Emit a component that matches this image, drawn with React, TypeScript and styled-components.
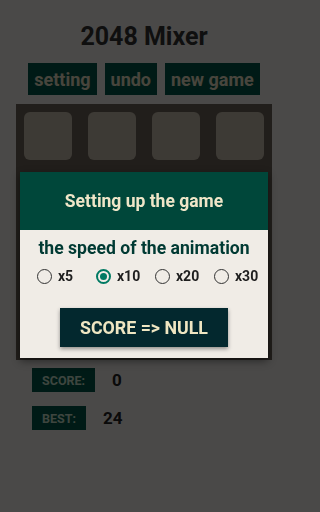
import styled, { createGlobalStyle, css } from "styled-components";

const GlobalStyle = createGlobalStyle`
  html, body {
    margin: 0;
    padding: 0;
    background: #f7f4f0;
    font-family: Roboto, "Liberation Sans", sans-serif;
  }
`;

const Page = styled.div`
  width: 288px;
  height: 512px;
  padding-top: 22px;
  box-sizing: border-box;
`;

const Title = styled.h1`
  margin: 0;
  text-align: center;
  font-size: 25px;
  line-height: 30px;
  font-weight: 700;
  color: #333;
`;

const Toolbar = styled.div`
  margin-top: 11px;
  display: flex;
  justify-content: center;
  gap: 8px;
`;

const ToolButton = styled.div`
  height: 32px;
  padding: 0 6px;
  display: flex;
  align-items: center;
  background: #00584a;
  color: #f0e8cc;
  font-size: 18px;
  font-weight: 700;
`;

const Board = styled.div`
  position: relative;
  width: 256px;
  height: 256px;
  margin: 9px auto 0;
  padding: 8px;
  box-sizing: border-box;
  background: #71645a;
  display: grid;
  grid-template-columns: repeat(4, 48px);
  grid-auto-rows: 48px;
  gap: 16px;
`;

const Tile = styled.div`
  background: #cbc1b1;
  border-radius: 6px;
`;

const Shade = styled.div`
  position: fixed;
  inset: 0;
  background: rgba(0, 0, 0, 0.7);
  z-index: 1;
`;

const Modal = styled.div`
  position: absolute;
  left: 4px;
  right: 4px;
  top: 68px;
  height: 186px;
  z-index: 2;
  display: flex;
  flex-direction: column;
  background: #f0ece6;
  box-shadow: 0 3px 8px rgba(0, 0, 0, 0.45);
`;

const ModalHeader = styled.div`
  height: 58px;
  flex: none;
  display: flex;
  align-items: center;
  justify-content: center;
  background: #00473a;
  color: #efe6c8;
  font-size: 17.5px;
  font-weight: 700;
`;

const ModalBody = styled.div`
  padding-top: 7px;
  display: flex;
  flex-direction: column;
`;

const Subtitle = styled.div`
  text-align: center;
  font-size: 17.6px;
  line-height: 22px;
  font-weight: 700;
  color: #003a33;
`;

const Speeds = styled.div`
  margin-top: 7px;
  padding-left: 17px;
  display: grid;
  grid-template-columns: repeat(4, 59px);
  height: 20px;
`;

const Speed = styled.label`
  display: flex;
  align-items: center;
  gap: 6px;
  font-size: 14px;
  font-weight: 700;
  color: #1e1e1e;
`;

const Radio = styled.span<{ checked?: boolean }>`
  width: 15px;
  height: 15px;
  box-sizing: border-box;
  border-radius: 50%;
  border: 1.5px solid #333;
  display: flex;
  align-items: center;
  justify-content: center;

  ${({ checked }) =>
    checked &&
    css`
      border: 2px solid #007a63;
      &::after {
        content: "";
        width: 7px;
        height: 7px;
        border-radius: 50%;
        background: #007a63;
      }
    `}
`;

const ResetButton = styled.div`
  margin: 22px auto 0;
  width: 168px;
  height: 39px;
  display: flex;
  align-items: center;
  justify-content: center;
  background: #03282e;
  color: #efe6c2;
  font-size: 17.8px;
  font-weight: 700;
  box-shadow: 0 2px 4px rgba(0, 0, 0, 0.4);
`;

const Stats = styled.div`
  margin-top: 8px;
  padding-left: 32px;
  display: flex;
  flex-direction: column;
  gap: 14px;
`;

const StatRow = styled.div`
  display: flex;
  align-items: center;
  gap: 17px;
`;

const StatLabel = styled.div`
  height: 24px;
  padding: 0 10px;
  display: flex;
  align-items: center;
  background: #00584a;
  color: #d0e8d4;
  font-size: 12.5px;
  font-weight: 700;
`;

const StatValue = styled.div`
  font-size: 17px;
  font-weight: 700;
  color: #222;
`;

const speeds = ["x5", "x10", "x20", "x30"];

export default function App() {
  return (
    <Page>
      <GlobalStyle />
      <Title>2048 Mixer</Title>
      <Toolbar>
        <ToolButton>setting</ToolButton>
        <ToolButton>undo</ToolButton>
        <ToolButton>new game</ToolButton>
      </Toolbar>
      <Board>
        {Array.from({ length: 16 }, (_, i) => (
          <Tile key={i} />
        ))}
        <Modal>
          <ModalHeader>Setting up the game</ModalHeader>
          <ModalBody>
            <Subtitle>the speed of the animation</Subtitle>
            <Speeds>
              {speeds.map((s) => (
                <Speed key={s}>
                  <Radio checked={s === "x10"} />
                  {s}
                </Speed>
              ))}
            </Speeds>
            <ResetButton>SCORE =&gt; NULL</ResetButton>
          </ModalBody>
        </Modal>
      </Board>
      <Stats>
        <StatRow>
          <StatLabel>SCORE:</StatLabel>
          <StatValue>0</StatValue>
        </StatRow>
        <StatRow>
          <StatLabel>BEST:</StatLabel>
          <StatValue>24</StatValue>
        </StatRow>
      </Stats>
      <Shade />
    </Page>
  );
}
